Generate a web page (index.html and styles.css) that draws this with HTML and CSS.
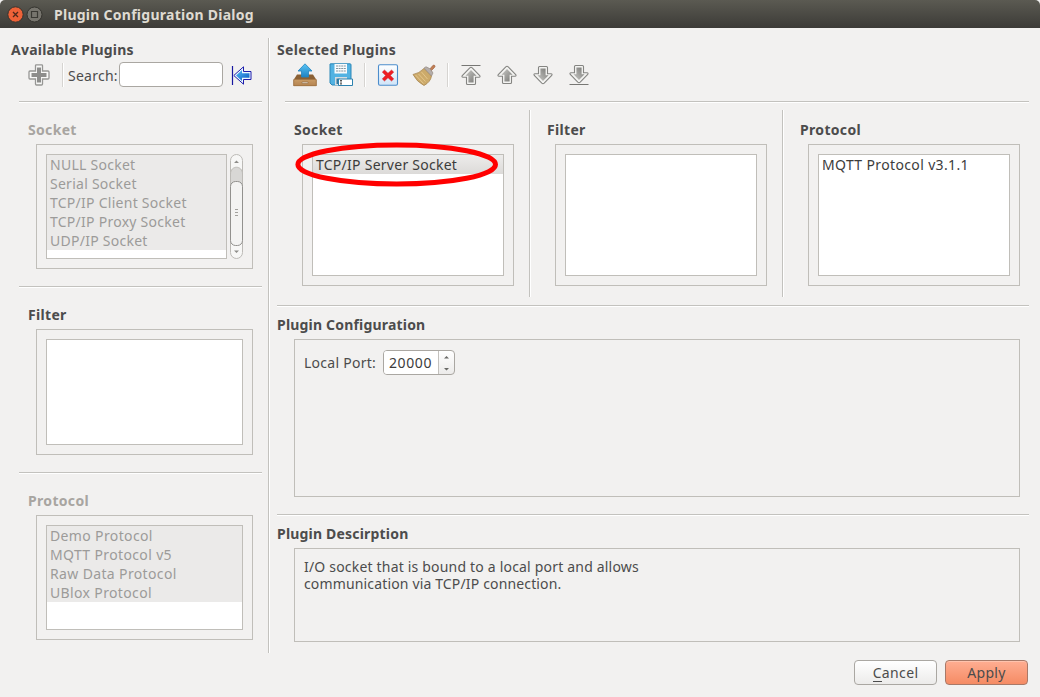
FILE: index.html
```html
<!DOCTYPE html>
<html lang="en">
<head>
<meta charset="utf-8">
<title>Plugin Configuration Dialog</title>
<link rel="stylesheet" href="styles.css">
</head>
<body>
<svg class="defs" width="0" height="0" aria-hidden="true">
  <defs>
    <linearGradient id="grey" x1="0" y1="0" x2="1" y2="1"><stop offset="0" stop-color="#c9c9c6"/><stop offset="1" stop-color="#777774"/></linearGradient>
    <linearGradient id="blue" x1="0" y1="0" x2="0" y2="1"><stop offset="0" stop-color="#58c4f5"/><stop offset="1" stop-color="#1f83c4"/></linearGradient>
    <linearGradient id="back" x1="0" y1="0" x2="1" y2="1"><stop offset="0" stop-color="#55bdf8"/><stop offset="1" stop-color="#0757bd"/></linearGradient>
    <linearGradient id="wood" x1="0" y1="0" x2="0" y2="1"><stop offset="0" stop-color="#c99b65"/><stop offset="1" stop-color="#b58450"/></linearGradient>
    <linearGradient id="page" x1="0" y1="0" x2="0" y2="1"><stop offset="0" stop-color="#fff"/><stop offset="1" stop-color="#cfe4f8"/></linearGradient>
    <symbol id="arrow" viewBox="0 0 20 20">
      <path d="M8.800 1.800Q10 .7 11.200 1.800L18.700 9.500Q19.600 11.300 18 11.300H14.500V17.500Q14.500 18.500 13.500 18.500H6.500Q5.500 18.500 5.500 17.500V11.300H2Q.4 11.300 1.300 9.500Z" fill="#f4f4f2" stroke="#858582" stroke-width="1.100"/>
      <path d="M10 4 15.600 9.800H12.600V16.500H7.400V9.800H4.400Z" fill="url(#grey)"/>
    </symbol>
  </defs>
</svg>
<header class="titlebar">
  <svg width="44" height="28" viewBox="0 0 44 28">
    <circle cx="15.500" cy="14.500" r="7.700" fill="#ee6238" stroke="#34332e"/>
    <path d="m13 12 5 5m0-5-5 5" stroke="#4d281b" stroke-width="1.300"/>
    <circle cx="34.500" cy="14.500" r="7.500" fill="#77756e" stroke="#34332e"/>
    <path d="M31.500 11.500h6v6h-6z" fill="none" stroke="#3a3934" stroke-width="1.200"/>
  </svg>
  <h1 class="title">Plugin Configuration Dialog</h1>
</header>
<div class="panes">
  <aside class="available">
    <h2 class="heading t-avail">Available Plugins</h2>
    <div class="tools tools-left">
      <svg class="add" width="22" height="22" viewBox="0 0 22 22">
        <path d="M7.500 1.500Q7.500.8 8.300.8H13.700Q14.500.8 14.500 1.500V7H20Q21 7 21 8V14Q21 15 20 15H14.500V20Q14.500 21 13.500 21H8.500Q7.500 21 7.500 20V15H2Q1 15 1 14V8Q1 7 2 7H7.500Z" fill="#f8f8f7" stroke="#969694" stroke-width="1.300"/>
        <path d="M9 3.500h4V9h5.500v4H13v5.500H9V13H3.500V9H9Z" fill="#8d8d8b"/>
      </svg>
      <span class="sep"></span>
      <label class="search-label" for="search">Search:</label>
      <input class="search" id="search" type="text">
      <svg class="collapse" width="22" height="20" viewBox="0 0 22 20">
        <path d="M1.500 0v19" stroke="#1717a0" stroke-width="1.200"/>
        <path d="M2.800 9.500 12.500.8V5.500H20V13.500H12.500V18.200Z" fill="#eef8ff" stroke="#1d1dab"/>
        <path d="M5 9.500 11 4V7.200H18.500V11.800H11V15Z" fill="url(#back)"/>
      </svg>
    </div>
    <hr class="rule">
    <section class="block">
      <h3 class="heading muted">Socket</h3>
      <div class="group group-socket">
        <ul class="list muted">
          <li>NULL Socket</li><li>Serial Socket</li><li>TCP/IP Client Socket</li><li>TCP/IP Proxy Socket</li><li>UDP/IP Socket</li>
        </ul>
        <svg class="scroll" width="13" height="105" viewBox="0 0 13 105">
          <rect x=".5" y=".5" width="12" height="104" rx="6" fill="#f7f7f6" stroke="#bcbab6"/>
          <path d="M.5 20C.5 11 12.500 11 12.500 20V85H.5Z" fill="#d8d7d5" stroke="#bcbab6"/>
          <rect x=".5" y="27.500" width="12" height="64" rx="5" fill="#f3f3f2" stroke="#92918e"/>
          <path d="M5 55.500h3M5 58.500h3M5 61.500h3" stroke="#a2a19d"/>
          <path d="M4 9h5L6.500 6.500ZM4 96.500h5L6.500 99Z" fill="#8e8d8a"/>
        </svg>
      </div>
    </section>
    <hr class="rule">
    <section class="block block-filter">
      <h3 class="heading">Filter</h3>
      <div class="group group-filter"><ul class="list"></ul></div>
    </section>
    <hr class="rule">
    <section class="block">
      <h3 class="heading muted">Protocol</h3>
      <div class="group group-protocol">
        <ul class="list muted protocols">
          <li>Demo Protocol</li><li>MQTT Protocol v5</li><li>Raw Data Protocol</li><li>UBlox Protocol</li>
        </ul>
      </div>
    </section>
  </aside>
  <main class="selected">
    <h2 class="heading">Selected Plugins</h2>
    <div class="tools tools-right">
      <svg width="24" height="24" viewBox="0 0 24 24">
        <path d="M4 11.500h16l3.500 5.500v6H.5v-6Z" fill="#8a6034"/>
        <path d="M.8 16.500h22.400v6.200H.8Z" fill="url(#wood)" stroke="#a47746" stroke-width=".8"/>
        <path d="M12 .8 19 8h-3.500v6h-7V8H5Z" fill="url(#blue)" stroke="#2385bf" stroke-width=".8"/>
        <path d="M9 19h6v1.300H9Z" fill="#eee1d0" stroke="#80613d" stroke-width=".5"/>
      </svg>
      <svg width="24" height="24" viewBox="0 0 24 24">
        <path d="M1.500.8h19.500q1 0 1 1V22H3L1 20V1Z" fill="#52b2e2" stroke="#2c88b8"/>
        <path d="M5.500 1h12.500v9.500H5.500Z" fill="#f8fbfd"/><path d="M7 3h10M7 5.500h10M7 8h10" stroke="#8496a0" stroke-dasharray="2 .6"/>
        <path d="M6 14h12v8H6Z" fill="#d7dde1"/><path d="M7.500 15.500h3v5.500H7.500Z" fill="#36789d"/>
        <path d="M9.500 16h14v6.500h-14Z" fill="#fff" stroke="#2d82af"/><path d="M11 17.500h2m-1 0v3.500m-1 0h2" stroke="#333" stroke-width=".8" fill="none"/>
      </svg>
      <span class="sep"></span>
      <svg class="delete" width="22" height="22" viewBox="0 0 22 22">
        <rect x="1.500" y=".8" width="19" height="20.500" rx="1.500" fill="url(#page)" stroke="#4c8dcc" stroke-width="1.100"/>
        <path d="m7.500 6 3.500 3.300L14.500 6 16.700 8.100 13.400 11.500l3.300 3.400-2.200 2.100L11 13.700 7.500 17 5.300 14.900l3.300-3.400L5.300 8.100Z" fill="#ee1d24" stroke="#cb2028" stroke-width=".5"/>
      </svg>
      <svg class="broom" width="24" height="22" viewBox="0 0 24 22">
        <path d="m17 6 3.800-4.500q1.300-1 2 .1t-.5 2.100L18.500 7.500" fill="#c27f55" stroke="#9a5d3b" stroke-width=".6"/>
        <path d="M12 4.500 19.500 12q-1 6-7.500 9.500Q5 18 1 10.500q6-1 11-6Z" fill="#ccaa6a" stroke="#a78550" stroke-width=".8"/>
        <path d="m3.500 11 8 8.500M6.500 10l7 7.500M9.500 8l6 7" stroke="#e6c88f" stroke-width=".9"/>
        <path d="m12 4 2-1.300q5 1.300 7 6.300L19.500 12Z" fill="#b4adaa" stroke="#8f8379" stroke-width=".6"/>
      </svg>
      <span class="sep"></span>
      <div class="moves">
        <svg width="20" height="22" viewBox="0 0 20 22"><path d="M.5 1.500h19" stroke="#777774"/><use href="#arrow" y="2" width="20" height="20"/></svg>
        <svg width="20" height="22" viewBox="0 0 20 22"><use href="#arrow" y="1" width="20" height="20"/></svg>
        <svg width="20" height="22" viewBox="0 0 20 22"><g transform="matrix(1 0 0 -1 0 22)"><use href="#arrow" y="1" width="20" height="20"/></g></svg>
        <svg width="20" height="22" viewBox="0 0 20 22"><g transform="matrix(1 0 0 -1 0 20)"><use href="#arrow" width="20" height="20"/></g><path d="M.5 20.500h19" stroke="#777774"/></svg>
      </div>
    </div>
    <hr class="rule rule-tools">
    <div class="columns">
      <section class="column">
        <h3 class="heading">Socket</h3>
        <div class="group">
          <ul class="list"><li class="current">TCP/IP Server Socket</li></ul>
          <svg class="marker" width="206" height="46" viewBox="0 0 206 46"><ellipse cx="102.700" cy="22.500" rx="98.800" ry="19.500" fill="none" stroke="#f00" stroke-width="5"/></svg>
        </div>
      </section>
      <section class="column">
        <h3 class="heading">Filter</h3>
        <div class="group"><ul class="list"></ul></div>
      </section>
      <section class="column">
        <h3 class="heading">Protocol</h3>
        <div class="group"><ul class="list protocols"><li>MQTT Protocol v3.1.1</li></ul></div>
      </section>
    </div>
    <hr class="rule rule-wide">
    <h2 class="heading t-config">Plugin Configuration</h2>
    <div class="group config">
      <label for="port">Local Port:</label>
      <div class="spin">
        <input class="port" id="port" type="text" value="20000">
        <svg width="15" height="23" viewBox="0 0 15 23"><path d="M5 7.500h5L7.500 5ZM5 17h5L7.500 19.500Z" fill="#696966"/></svg>
      </div>
    </div>
    <hr class="rule rule-wide">
    <h2 class="heading t-config">Plugin Descirption</h2>
    <div class="group description"><p><span class="line-first">I/O socket that is bound to a local port and allows</span><br><span class="line-second">communication via TCP/IP connection.</span></p></div>
  </main>
</div>
<footer class="actions">
  <button class="button"><span class="mnemonic">C</span>ancel</button>
  <button class="button primary">Apply</button>
</footer>
</body>
</html>
```
FILE: styles.css
```css
* { box-sizing: border-box; }
body { margin: 0; width: 1040px; height: 697px; overflow: hidden; background: #f2f1f0; color: #4c4c4c; font: 14px/19px "Noto Sans", "Open Sans", sans-serif; letter-spacing: .26px; }
h1, h2, h3, p, ul { margin: 0; padding: 0; }
svg { display: block; flex: none; }
span { display: inline-block; }
.defs { position: absolute; }
.titlebar { height: 28px; display: flex; background: linear-gradient(#5b5a52, #3c3b37); border-radius: 5px 5px 0 0; }
.title { margin-left: 10px; color: #dfdbd2; font-size: 14px; line-height: 30px; white-space: nowrap; }
.panes { display: flex; height: 625px; }
.available { width: 270px; height: 615px; margin-top: 10px; border-right: 1px solid #fff; box-shadow: inset -1px 0 #c3c2be; }
.selected { width: 770px; padding: 10px 11px 0 7px; }
.heading { height: 24px; font-size: 14px; line-height: 24px; font-weight: 700; letter-spacing: .32px; white-space: nowrap; }
.heading.t-avail { padding-left: 11px; letter-spacing: .23px; }
.heading.t-config { letter-spacing: .19px; }
.muted { color: #a8a5a1; }
.tools { height: 39px; display: flex; align-items: flex-start; }
.tools-left { padding-left: 28px; }
.add { margin-top: 2px; }
.sep { width: 1px; height: 24px; background: #d6d4d1; box-shadow: 1px 0 #fff; flex: none; }
.tools-left .sep { margin: 1px 5px 0 12px; }
.search-label { width: 51px; padding-top: 4px; white-space: nowrap; }
.search { width: 104px; height: 25px; border: 1px solid #aaa7a2; border-radius: 4px; background: #fff; }
.collapse { margin: 4px 0 0 8px; }
.rule { width: 243px; height: 2px; margin: 0 0 0 19px; border: 0; background: linear-gradient(#c3c2be 50%, #fff 50%); }
.block { height: 183px; padding: 15px 16px 0 28px; }
.block-filter { height: 184px; }
.group { border: 1px solid #c0beb9; padding: 9px; }
.block .group { width: 217px; height: 125px; margin: 2px 0 0 8px; display: flex; }
.block .group-filter { height: 126px; }
.list { flex: 1; height: 100%; background: #fff; border: 1px solid #c0beb9; list-style: none; white-space: nowrap; }
.list li { height: 19px; padding-left: 3px; line-height: 20px; }
.list.muted li { background: #ebeae9; }
.list.muted { color: #9c9b99; }
.list.protocols { letter-spacing: .36px; }
.scroll { margin-left: 3px; }
.tools-right { height: 39px; padding: 1px 0 0 16px; gap: 12px; }
.tools-right .sep { margin: 0 0 0 -1px; }
.delete { margin-top: 1px; }
.broom { margin: 1px 0 0 1px; }
.moves { display: flex; gap: 16px; margin: 1px 0 0 1px; }
.rule-tools { width: 744px; margin-left: 8px; }
.columns { display: flex; height: 187px; margin: 7px 0 8px; }
.column { width: 253px; padding: 8px 15px 0 17px; border-right: 1px solid #c3c2be; box-shadow: 1px 0 #fff; }
.column:last-child { border: 0; box-shadow: none; width: 246px; }
.column .group { position: relative; width: 212px; height: 142px; margin: 2px 0 0 8px; }
.column .list { color: #3c3c3c; }
.list .current { background: linear-gradient(#edeceb, #dcdad8); }
.marker { position: absolute; left: -9px; top: -3px; }
.rule-wide { width: 752px; margin-left: 0; }
.rule-wide + .heading { margin-top: 6px; }
.config { width: 726px; height: 158px; margin: 2px 0 17px 17px; display: flex; align-items: flex-start; padding-top: 10px; }
.config label { width: 79px; padding-top: 3px; white-space: nowrap; }
.spin { width: 72px; height: 25px; display: flex; border: 1px solid #aaa7a2; border-radius: 4px; background: linear-gradient(#fff, #ecebea); overflow: hidden; }
.port { width: 55px; height: 23px; padding: 0 0 0 5px; border: 0; border-right: 1px solid #c3c1bd; background: #fff; color: #3c3c3c; font: inherit; letter-spacing: .6px; }
.description { width: 726px; height: 94px; margin: 2px 0 0 17px; line-height: 17px; }
.line-first { letter-spacing: .19px; }
.line-second { letter-spacing: .15px; }
.actions { display: flex; gap: 8px; justify-content: flex-end; padding: 7px 12px 0 0; }
.button { width: 83px; height: 25px; padding: 0; border: 1px solid #aaa7a2; border-radius: 4px; background: linear-gradient(#fff, #ecebea); color: #4c4c4c; font: inherit; letter-spacing: .35px; }
.primary { border-color: #a87968; background: linear-gradient(#ffae92, #f58b64); box-shadow: inset 0 1px #ffc3ad; }
.mnemonic { border-bottom: 1px solid #4c4c4c; line-height: 17px; }
```
